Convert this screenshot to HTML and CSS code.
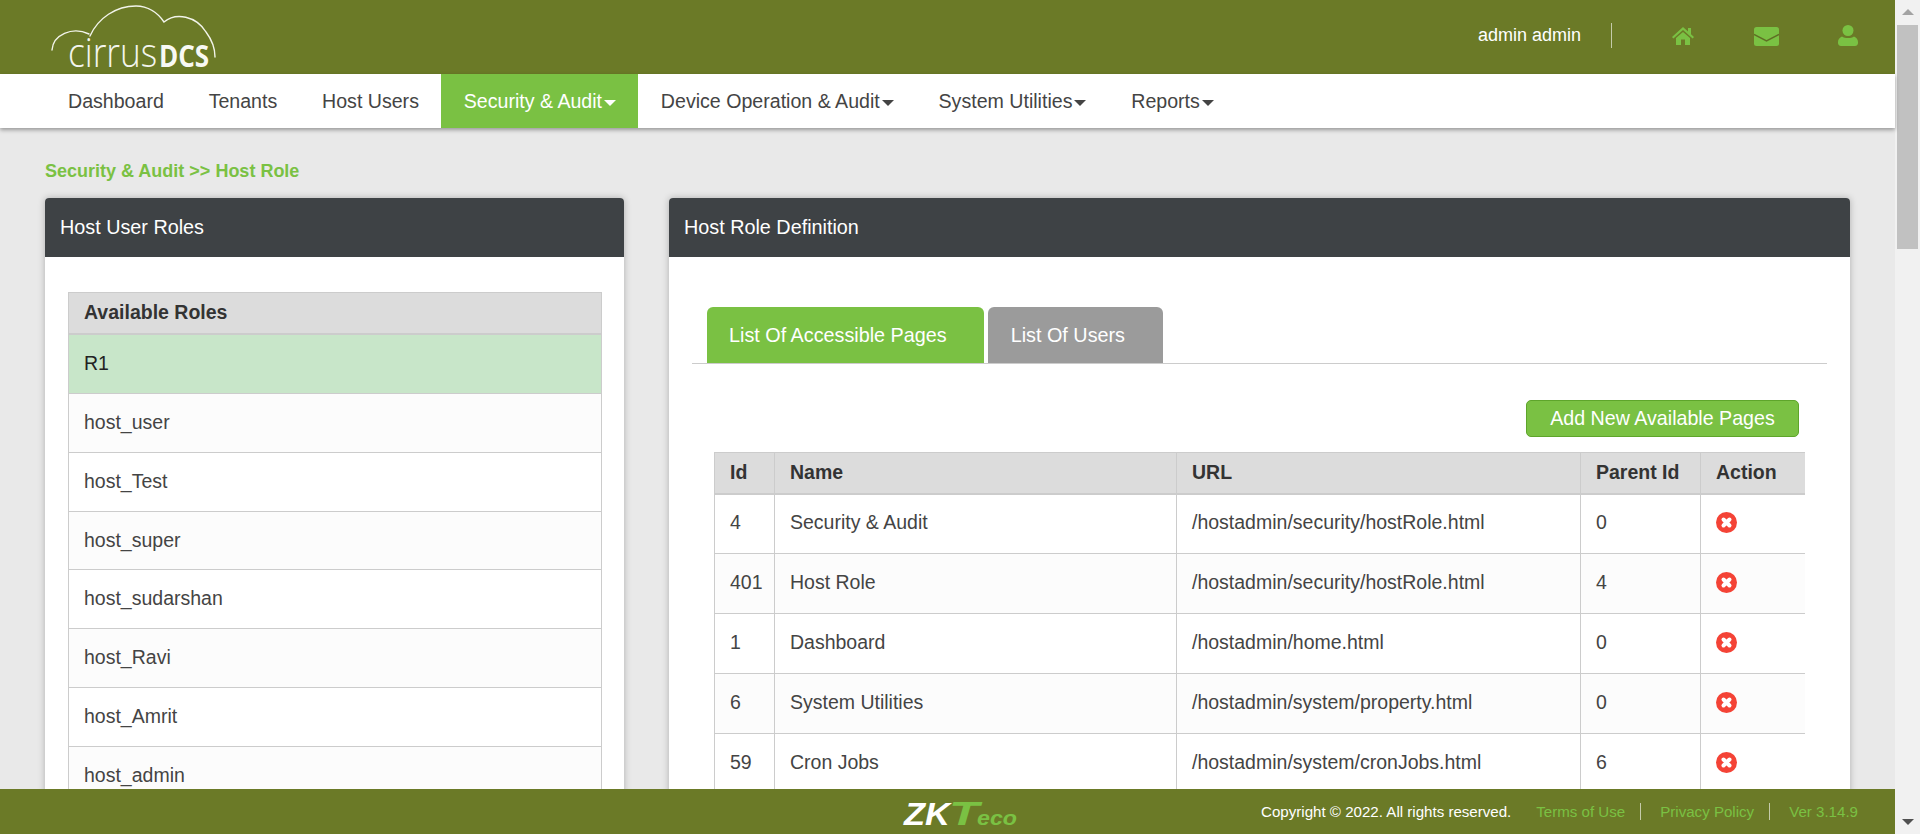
FILE: index.html
```html
<!DOCTYPE html>
<html lang="en">
<head>
<meta charset="utf-8">
<title>Host Role</title>
<link rel="stylesheet" href="styles.css">
</head>
<body>
<div class="page">
  <header class="topbar">
    <svg class="logo" viewBox="0 0 190 74" width="190" height="74" aria-label="cirrusDCS">
      <g class="cloud">
        <path d="M12 50C13 35 32 26 49 34"/>
        <path d="M50 36C58 18 76 6 96 6C108 6 118 13 124 22C136 12 156 16 166 32C172 40 175 48 175 57"/>
      </g>
      <text class="logo-thin" transform="translate(28 67) scale(.88 1)">cirrus</text>
      <text class="logo-bold" transform="translate(119 67) scale(.84 1)">DCS</text>
    </svg>
    <div class="user-area">
      <span class="user-name">admin admin</span>
      <span class="user-div"></span>
      <svg class="ico ico-home" viewBox="0 0 22 18" width="22" height="18"><path d="M11 0L0 10l1.4 1.5L11 3l9.6 8.5L22 10l-3-2.7V1h-3v3.6z"/><path d="M4 11l7-6 7 6v7h-5v-5.5H9V18H4z"/></svg>
      <svg class="ico ico-mail" viewBox="0 0 25 19" width="25" height="19"><rect width="25" height="19" rx="2.5"/><path class="ico-fold" d="M0 7.5l12.500 6.500 12.500-6.500"/></svg>
      <svg class="ico ico-user" viewBox="0 0 20 21" width="20" height="21"><circle cx="10" cy="5.500" r="5.500"/><path d="M4 11.500c3 2 9 2 12 0 2.500 1 4 3 4 5.500v1c0 1.500-1 3-3 3H3c-2 0-3-1.500-3-3v-1c0-2.500 1.500-4.500 4-5.500z"/></svg>
    </div>
  </header>
  <nav class="nav">
    <a class="nav-item">Dashboard</a>
    <a class="nav-item">Tenants</a>
    <a class="nav-item">Host Users</a>
    <a class="nav-item active">Security &amp; Audit<i class="caret"></i></a>
    <a class="nav-item">Device Operation &amp; Audit<i class="caret"></i></a>
    <a class="nav-item">System Utilities<i class="caret"></i></a>
    <a class="nav-item">Reports<i class="caret"></i></a>
  </nav>
  <main class="main">
    <div class="crumb">Security &amp; Audit &gt;&gt; Host Role</div>
    <div class="columns">
      <section class="panel">
        <h2 class="panel-head">Host User Roles</h2>
        <div class="panel-body roles-body">
          <div class="roles">
            <div class="roles-head">Available Roles</div>
            <div class="role selected">R1</div>
            <div class="role alt">host_user</div>
            <div class="role">host_Test</div>
            <div class="role alt">host_super</div>
            <div class="role">host_sudarshan</div>
            <div class="role alt">host_Ravi</div>
            <div class="role">host_Amrit</div>
            <div class="role alt">host_admin</div>
          </div>
        </div>
      </section>
      <section class="panel">
        <h2 class="panel-head">Host Role Definition</h2>
        <div class="panel-body def-body">
          <div class="tabs">
            <a class="tab on">List Of Accessible Pages</a>
            <a class="tab">List Of Users</a>
          </div>
          <div class="actions"><button class="add-btn">Add New Available Pages</button></div>
          <div class="table-wrap">
            <table class="pages">
              <colgroup><col class="c-id"><col class="c-name"><col class="c-url"><col class="c-parent"><col class="c-action"></colgroup>
              <thead><tr><th>Id</th><th>Name</th><th>URL</th><th>Parent Id</th><th>Action</th></tr></thead>
              <tbody>
                <tr><td>4</td><td>Security &amp; Audit</td><td>/hostadmin/security/hostRole.html</td><td>0</td><td><svg class="del" viewBox="0 0 21 21" width="21" height="21"><circle cx="10.500" cy="10.500" r="10.500"/><path d="M7.500 7.500l6 6M13.500 7.500l-6 6"/></svg></td></tr>
                <tr><td>401</td><td>Host Role</td><td>/hostadmin/security/hostRole.html</td><td>4</td><td><svg class="del" viewBox="0 0 21 21" width="21" height="21"><circle cx="10.500" cy="10.500" r="10.500"/><path d="M7.500 7.500l6 6M13.500 7.500l-6 6"/></svg></td></tr>
                <tr><td>1</td><td>Dashboard</td><td>/hostadmin/home.html</td><td>0</td><td><svg class="del" viewBox="0 0 21 21" width="21" height="21"><circle cx="10.500" cy="10.500" r="10.500"/><path d="M7.500 7.500l6 6M13.500 7.500l-6 6"/></svg></td></tr>
                <tr><td>6</td><td>System Utilities</td><td>/hostadmin/system/property.html</td><td>0</td><td><svg class="del" viewBox="0 0 21 21" width="21" height="21"><circle cx="10.500" cy="10.500" r="10.500"/><path d="M7.500 7.500l6 6M13.500 7.500l-6 6"/></svg></td></tr>
                <tr><td>59</td><td>Cron Jobs</td><td>/hostadmin/system/cronJobs.html</td><td>6</td><td><svg class="del" viewBox="0 0 21 21" width="21" height="21"><circle cx="10.500" cy="10.500" r="10.500"/><path d="M7.500 7.500l6 6M13.500 7.500l-6 6"/></svg></td></tr>
              </tbody>
            </table>
          </div>
        </div>
      </section>
    </div>
  </main>
  <footer class="footer">
    <svg class="zk" viewBox="0 0 116 26" width="116" height="26" aria-label="ZKTeco">
      <text class="zk-w" x="2" y="24" textLength="46" lengthAdjust="spacingAndGlyphs">ZK</text>
      <text class="zk-g" x="47" y="24" textLength="30" lengthAdjust="spacingAndGlyphs">T</text>
      <text class="zk-e" x="75" y="24" textLength="40" lengthAdjust="spacingAndGlyphs">eco</text>
    </svg>
    <div class="foot-right">
      <span class="copy">Copyright © 2022. All rights reserved.</span>
      <a class="flink">Terms of Use</a>
      <a class="flink sep">Privacy Policy</a>
      <a class="flink sep">Ver 3.14.9</a>
    </div>
  </footer>
</div>
<div class="scrollbar">
  <span class="arrow up"></span>
  <span class="thumb"></span>
  <span class="arrow down"></span>
</div>
</body>
</html>
```

FILE: styles.css
```css
* { box-sizing: border-box; }
html, body { margin: 0; height: 100%; overflow: hidden; }
body {
  display: flex;
  font-family: "Liberation Sans", Arial, sans-serif;
  font-size: 19.500px;
  color: #333;
  background: #e9e9e9;
}
.page { flex: 1; min-width: 0; height: 100vh; display: flex; flex-direction: column; }

.topbar {
  height: 74px; flex: none;
  background: #6b7a27;
  display: flex; align-items: flex-start; justify-content: space-between;
  padding-left: 40px;
}
.logo { display: block; overflow: visible; }
.cloud path { fill: none; stroke: #f2f4ea; stroke-width: 1.4; stroke-linecap: round; }
.logo-thin { font-family: "Open Sans", sans-serif; font-weight: 300; font-size: 40px; fill: #f4f5ee; }
.logo-bold { font-family: "Open Sans", sans-serif; font-weight: 700; font-size: 31px; fill: #f8f9f4; }

.user-area { display: flex; align-items: center; height: 70px; padding-right: 37px; }
.user-name { color: #fff; font-size: 18px; width: 133px; }
.user-div { width: 1px; height: 25px; background: #c5cbaa; margin-right: 60px; }
.ico { display: block; fill: #7ac143; }
.ico-home { margin-right: 60px; margin-top: 1px; }
.ico-mail { margin-right: 59px; margin-top: 3px; }
.ico-user { margin-top: 1px; }
.ico-fold { fill: none; stroke: #5f6f25; stroke-width: 1.5; }

.nav {
  height: 54px; flex: none;
  background: #fff;
  display: flex; padding-left: 45.600px;
  box-shadow: 0 2px 4px rgba(0,0,0,.35);
  position: relative; z-index: 2;
}
.nav-item { padding: 0 22.400px; font-size: 19.600px; line-height: 54px; color: #444; white-space: nowrap; }
.nav-item.active { background: #7ac143; color: #fff; }
.caret {
  display: inline-block; margin-left: 2px; vertical-align: middle;
  border-top: 6px solid currentColor;
  border-left: 6px solid transparent; border-right: 6px solid transparent;
}

.main { flex: 1; min-height: 0; overflow: hidden; padding: 0 45px; }
.crumb { height: 70px; padding-top: 33px; font-size: 18px; font-weight: 700; line-height: 20px; color: #7ac143; }
.columns { display: grid; grid-template-columns: 579px 1181px; gap: 45px; }
.panel { background: #fff; border-radius: 4px 4px 0 0; box-shadow: 0 0 7px rgba(0,0,0,.25); height: 900px; }
.panel-head {
  margin: 0; height: 59px; padding-left: 15px;
  background: #3e4245; color: #fff;
  font-size: 19.800px; font-weight: 400; line-height: 58px;
  border-radius: 4px 4px 0 0;
}
.roles-body { padding: 35px 22px 0 23px; }
.roles { border: 1px solid #ccc; }
.roles-head { height: 42px; line-height: 39px; padding-left: 15px; background: #dcdcdc; font-weight: 700; border-bottom: 2px solid #ccc; color: #333; }
.role { height: 58.860px; line-height: 56px; padding-left: 15px; border-bottom: 1px solid #ccc; background: #fff; color: #444; }
.role.alt { background: #fcfcfc; }
.role.selected { background: #c8e6c9; color: #222; }

.def-body { padding: 50px 23px 0; }
.tabs { display: flex; gap: 4px; padding-left: 15px; height: 57px; border-bottom: 1px solid #ccc; }
.tab { height: 56px; font-size: 19.800px; line-height: 57px; padding: 0 38px 0 23px; background: #9b9b9b; color: #fff; border-radius: 6px 6px 0 0; white-space: nowrap; }
.tab.on { background: #7ac143; padding: 0 37px 0 22px; }
.actions { display: flex; justify-content: flex-end; padding: 36px 28px 15px 0; }
.add-btn {
  width: 273px; height: 37px; padding: 0;
  background: #7ac143; border: 1px solid #5ea52b; border-radius: 5px;
  color: #fff; font: inherit; font-size: 19.650px; line-height: 33px;
}
.table-wrap { margin: 0 22px; overflow: hidden; }
.pages { width: 1106px; table-layout: fixed; border-collapse: collapse; }
.c-id { width: 60px; } .c-name { width: 402px; } .c-url { width: 404px; } .c-parent { width: 120px; } .c-action { width: 120px; }
.pages th, .pages td { border: 1px solid #ccc; padding: 0 15px; text-align: left; }
.pages th { height: 41px; background: #dcdcdc; font-weight: 700; color: #333; border-bottom-width: 2px; }
.pages td { height: 60px; padding-bottom: 2px; color: #444; }
.pages tbody tr:nth-child(even) td { background: #fcfcfc; }
.del { display: block; }
.del circle { fill: #f44336; }
.del path { stroke: #fff; stroke-width: 4; stroke-linecap: round; fill: none; }

.footer {
  height: 45px; flex: none;
  background: #6b7a27;
  display: flex; align-items: center; justify-content: space-between;
  padding-left: 902px; padding-right: 37px;
  position: relative; z-index: 3;
}
.zk { display: block; margin-top: 4px; overflow: visible; }
.zk-w, .zk-g, .zk-e { font-family: "Liberation Sans", sans-serif; font-style: italic; font-weight: 700; }
.zk-w { font-size: 32px; fill: #fff; }
.zk-g { font-size: 34px; fill: #7ac143; }
.zk-e { font-size: 20px; fill: #7ac143; }
.foot-right { display: flex; align-items: center; font-size: 15.100px; }
.copy { color: #fff; margin-right: 25px; }
.flink { color: #7ac143; }
.flink.sep { border-left: 1px solid #c5cbaa; margin-left: 15px; padding-left: 19px; line-height: 17px; }

.scrollbar {
  width: 25px; flex: none; height: 100vh;
  background: #f1f1f1;
  display: flex; flex-direction: column; align-items: center;
  padding: 9px 2px 9px 2px;
}
.thumb { display: block; width: 21px; height: 224px; margin-top: 10px; background: #c1c1c1; }
.arrow { display: block; width: 0; height: 0; border-left: 6px solid transparent; border-right: 6px solid transparent; }
.arrow.up { border-bottom: 6px solid #a3a3a3; }
.arrow.down { border-top: 6px solid #505050; margin-top: auto; }
```
